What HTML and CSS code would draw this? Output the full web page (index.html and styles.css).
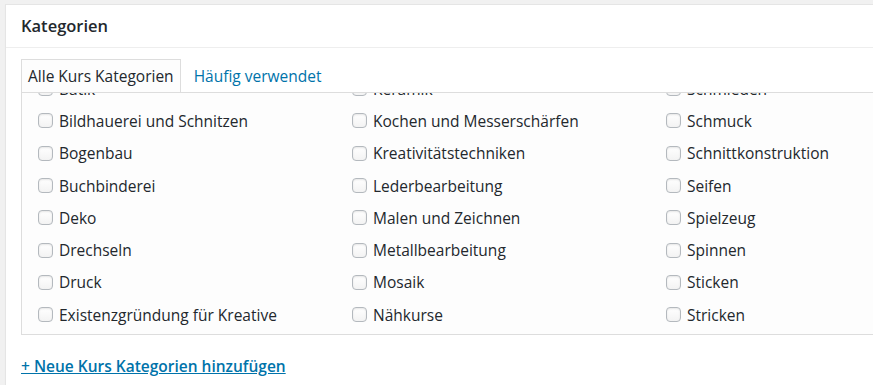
FILE: index.html
```html
<!DOCTYPE html>
<html lang="de">
<head>
    <meta charset="UTF-8">
    <title>Kategorien</title>
    <link rel="stylesheet" href="styles.css">
</head>
<body>
    <div class="postbox">
        <h2 class="postbox-title">Kategorien</h2>
        <div class="inside">
            <ul class="tabs">
                <li class="tab active">Alle Kurs Kategorien</li>
                <li class="tab"><a href="#">Häufig verwendet</a></li>
            </ul>
            <div class="tabs-panel">
                <ul class="checklist">
                    <li><label><input type="checkbox"> Batik</label></li>
                    <li><label><input type="checkbox"> Keramik</label></li>
                    <li><label><input type="checkbox"> Schmieden</label></li>
                    <li><label><input type="checkbox"> Bildhauerei und Schnitzen</label></li>
                    <li><label><input type="checkbox"> Kochen und Messerschärfen</label></li>
                    <li><label><input type="checkbox"> Schmuck</label></li>
                    <li><label><input type="checkbox"> Bogenbau</label></li>
                    <li><label><input type="checkbox"> Kreativitätstechniken</label></li>
                    <li><label><input type="checkbox"> Schnittkonstruktion</label></li>
                    <li><label><input type="checkbox"> Buchbinderei</label></li>
                    <li><label><input type="checkbox"> Lederbearbeitung</label></li>
                    <li><label><input type="checkbox"> Seifen</label></li>
                    <li><label><input type="checkbox"> Deko</label></li>
                    <li><label><input type="checkbox"> Malen und Zeichnen</label></li>
                    <li><label><input type="checkbox"> Spielzeug</label></li>
                    <li><label><input type="checkbox"> Drechseln</label></li>
                    <li><label><input type="checkbox"> Metallbearbeitung</label></li>
                    <li><label><input type="checkbox"> Spinnen</label></li>
                    <li><label><input type="checkbox"> Druck</label></li>
                    <li><label><input type="checkbox"> Mosaik</label></li>
                    <li><label><input type="checkbox"> Sticken</label></li>
                    <li><label><input type="checkbox"> Existenzgründung für Kreative</label></li>
                    <li><label><input type="checkbox"> Nähkurse</label></li>
                    <li><label><input type="checkbox"> Stricken</label></li>
                </ul>
            </div>
            <p class="add-new"><a href="#">+ Neue Kurs Kategorien hinzufügen</a></p>
        </div>
    </div>
</body>
</html>
```

FILE: styles.css
```css
html, body {
    overflow: hidden;
}

body {
    font-family: "Open Sans", sans-serif;
    font-size: 15.5px;
    color: #23282d;
    background-color: #f1f1f1;
    margin: 0;
    padding: 4px 0 0 5px;
}

a {
    color: #0073aa;
    text-decoration: none;
}

.postbox {
    width: 1000px;
    height: 400px;
    background-color: #fff;
    border: 1px solid #e5e5e5;
    box-shadow: 0 1px 1px rgba(0, 0, 0, 0.04);
}

.postbox-title {
    margin: 0;
    height: 42px;
    line-height: 42px;
    padding: 0 15px;
    font-size: 16.5px;
    font-weight: 600;
    border-bottom: 1px solid #eee;
}

.inside {
    padding: 11px 15px 0;
}

.tabs {
    list-style: none;
    margin: 0;
    padding: 0;
    display: flex;
}

.tab {
    height: 32px;
    line-height: 32px;
    padding: 0 6px;
    margin-right: 6px;
    border: 1px solid transparent;
    border-bottom: none;
}

.tab.active {
    background-color: #fdfdfd;
    border-color: #ddd;
    position: relative;
    top: 1px;
    margin-top: -1px;
}

.tabs-panel {
    height: 241px;
    overflow: hidden;
    border: 1px solid #ddd;
    background-color: #fdfdfd;
}

.checklist {
    list-style: none;
    margin: -21px 0 0;
    padding: 0 0 0 16px;
    display: grid;
    grid-template-columns: repeat(3, 314px);
    grid-auto-rows: 32.3px;
}

.checklist li {
    display: flex;
    align-items: center;
    padding-top: 1px;
}

.checklist label {
    display: flex;
    align-items: center;
    white-space: nowrap;
}

input[type="checkbox"] {
    -webkit-appearance: none;
    appearance: none;
    width: 15px;
    height: 15px;
    margin: 0 6px 0 0;
    border: 1px solid #b4b9be;
    border-radius: 4px;
    background-color: #fff;
    background-image: linear-gradient(#fff, #f3f3f3);
    box-shadow: inset 0 1px 2px rgba(0, 0, 0, 0.1);
}

.add-new {
    margin: 21px 0 0;
    line-height: 20px;
    font-weight: 600;
}

.add-new a {
    text-decoration: underline;
}
```
